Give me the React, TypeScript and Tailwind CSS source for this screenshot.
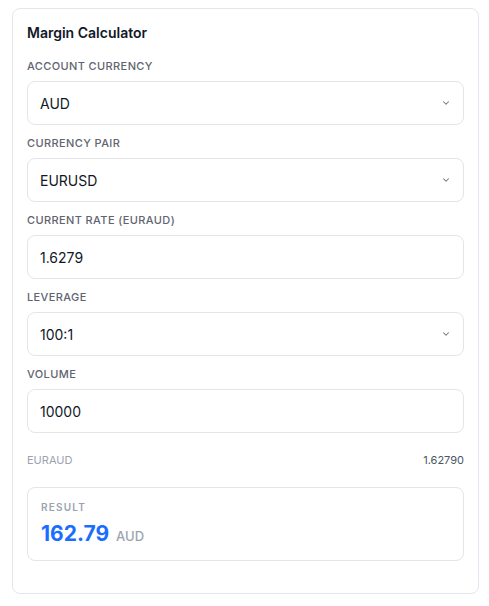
import React from "react";

function Chevron() {
  return (
    <svg width="10" height="10" viewBox="0 0 24 24" fill="none" stroke="#6b7280" strokeWidth="2.5" strokeLinecap="round" strokeLinejoin="round">
      <path d="M6 9l6 6 6-6" />
    </svg>
  );
}

function Field({ label, value, select }: { label: string; value: string; select?: boolean }) {
  return (
    <div className="flex flex-col">
      <div className="text-[11px] leading-4 font-medium tracking-[0.035em] uppercase text-[#5f6470]">{label}</div>
      <div className="mt-[7px] h-11 rounded-lg border border-[#e3e5e9] bg-white flex items-center justify-between pl-3 pr-3">
        <span className="text-[14px] text-[#111827]">{value}</span>
        {select && <Chevron />}
      </div>
    </div>
  );
}

export default function App() {
  return (
    <div className="bg-white min-h-screen pt-2 pl-3" style={{ fontFamily: "Inter, 'Noto Sans', sans-serif" }}>
      <div className="w-[467px] rounded-lg border border-[#e2e7ef] bg-white px-[14px] pt-[14px] pb-8">
        <h2 className="text-[14px] leading-5 font-semibold text-[#111827]">Margin Calculator</h2>

        <div className="mt-[15px] flex flex-col gap-[10px]">
          <Field label="Account Currency" value="AUD" select />
          <Field label="Currency Pair" value="EURUSD" select />
          <Field label="Current Rate (EURAUD)" value="1.6279" />
          <Field label="Leverage" value="100:1" select />
          <Field label="Volume" value="10000" />
        </div>

        <div className="mt-[19px] flex items-center justify-between text-[11px] leading-4">
          <span className="text-[#9ca3af]">EURAUD</span>
          <span className="text-[#4b5563]">1.62790</span>
        </div>

        <div className="mt-[19px] h-[74px] rounded-lg border border-[#e3e5e9] px-[13px] pt-[13px]">
          <div className="text-[10px] leading-3 font-semibold tracking-[0.12em] uppercase text-[#9ca3af]">Result</div>
          <div className="mt-[7px] flex items-baseline gap-[7px]">
            <span className="text-[21px] leading-7 font-bold text-[#1a6dff]">162.79</span>
            <span className="text-[13px] font-medium text-[#9ca3af]">AUD</span>
          </div>
        </div>
      </div>
    </div>
  );
}
